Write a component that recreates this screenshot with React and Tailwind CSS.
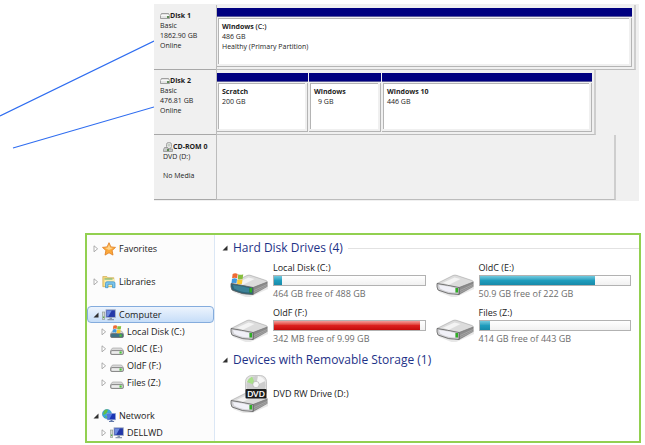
import React from "react";

function SmallDrive() {
  return (
    <svg width="10" height="6" viewBox="0 0 10 6" aria-hidden="true">
      <path d="M1.5 .5h7l1 2v3h-9v-3z" fill="#e4e4e4" stroke="#8b8b8b" strokeWidth=".8" />
      <path d="M.7 2.6h8.6" stroke="#fff" strokeWidth=".8" />
      <rect x="7" y="3" width="2" height="2" fill="#5d8a55" />
    </svg>
  );
}

function CdDrive() {
  return (
    <svg width="10" height="10" viewBox="0 0 10 10" aria-hidden="true">
      <rect x="3.5" y=".5" width="5" height="6" rx="2" fill="#e6e6e6" stroke="#8f8f8f" strokeWidth=".8" />
      <circle cx="6" cy="3" r="1" fill="#fff" stroke="#8fa38f" strokeWidth=".6" />
      <path d="M1.5 5.5h3l1 1.5h4v2.5h-9v-2z" fill="#c9c9c9" stroke="#868686" strokeWidth=".7" />
      <rect x="4" y="7" width="2" height="2" fill="#5d8a55" />
    </svg>
  );
}

function Partition({ name, letter, size, status, grow, indent }) {
  return (
    <div className={"flex min-w-0 flex-col " + grow}>
      <div className="h-[9px] border-b border-[#5a5a9c] bg-[#000080]" />
      <div className="mt-px flex-1 border-r border-b border-[#b4b4b4] bg-[#f0f0f0] pr-[2px] pb-[2px] pl-px">
        <div className="h-full border-t border-l border-[#b4b4b4] bg-white pt-[3px] pl-[3px]">
          <p>
            <b>{name}</b> {letter && <span className="font-semibold">{letter}</span>}
          </p>
          <p className={indent}>{size}</p>
          {status && <p>{status}</p>}
        </div>
      </div>
    </div>
  );
}

function DiskLabel({ name, lines }) {
  return (
    <div className="w-[62px] shrink-0 border-b border-[#a8a8a8] pt-[6px] pl-[6px]">
      <h3 className="flex items-center font-bold">
        <SmallDrive />
        {name}
      </h3>
      {lines.map((l) => (
        <p key={l}>{l}</p>
      ))}
    </div>
  );
}

function DiskManagement() {
  return (
    <section className="min-w-0 flex-1 bg-[#f0f0f0] pt-px pb-px font-['Open_Sans','Liberation_Sans',sans-serif] text-[7px] leading-[10px] text-[#1c1c1c]">
      <div className="flex h-[65px]">
        <DiskLabel name="Disk 1" lines={["Basic", "1862.90 GB", "Online"]} />
        <div className="mr-[3px] flex flex-1 border-r-2 border-b border-l border-[#bcbcbc] border-r-[#cecece] pt-[3px] pr-[2px] pb-[2px]">
          <Partition name="Windows" letter="(C:)" size="486 GB" status="Healthy (Primary Partition)" grow="flex-1" />
        </div>
      </div>
      <div className="flex h-[65px]">
        <DiskLabel name="Disk 2" lines={["Basic", "476.81 GB", "Online"]} />
        <div className="mr-[43px] flex flex-1 gap-px border-r-2 border-b border-l border-[#bcbcbc] border-r-[#cecece] pt-[3px] pr-[2px] pb-[2px]">
          <Partition name="Scratch" size="200 GB" grow="flex-[91]" />
          <Partition name="Windows" size="9 GB" grow="flex-[72]" indent="pl-[4px]" />
          <Partition name="Windows 10" size="446 GB" grow="flex-[210]" />
        </div>
      </div>
      <div className="flex h-[65px]">
        <div className="w-[62px] shrink-0 border-b border-[#a8a8a8] pt-[7px] pl-[9px]">
          <h3 className="flex items-center font-bold whitespace-nowrap">
            <CdDrive />
            CD-ROM 0
          </h3>
          <p>DVD (D:)</p>
          <p className="mt-[9px]">No Media</p>
        </div>
        <div className="mr-[23px] flex-1 border-r-2 border-b border-l border-[#bcbcbc] border-r-[#cecece]" />
      </div>
    </section>
  );
}

function Arrow({ open }) {
  return (
    <svg width="6" height="8" viewBox="0 0 6 8" className="shrink-0" aria-hidden="true">
      {open ? (
        <path d="M5.500 1.500v5H.5z" fill="#303030" />
      ) : (
        <path d="M1 .8v6l3.600-3z" fill="#fff" stroke="#9a9a9a" strokeWidth=".8" />
      )}
    </svg>
  );
}

function StarIcon() {
  return (
    <svg width="14" height="14" viewBox="0 0 14 14" aria-hidden="true">
      <path d="M7 .7l1.900 4.200 4.600.5-3.400 3.100.9 4.600L7 10.800l-4 2.300.9-4.600L.5 5.400l4.600-.5z" fill="#fba93c" stroke="#e07b1c" strokeWidth=".8" />
      <path d="M7 2.500l1.200 3 2.800.4L7 8 3 6l2.800-.5z" fill="#ffd48a" />
    </svg>
  );
}

function LibraryIcon() {
  return (
    <svg width="14" height="14" viewBox="0 0 14 14" aria-hidden="true">
      <path d="M.8 1.500h4l1 1.200h6v9H.8z" fill="#f4d67c" stroke="#c9a444" strokeWidth=".6" />
      <path d="M2.500 4h10v7h-10z" fill="#fbeeb4" />
      <path d="M2.500 4h8" stroke="#79b879" strokeWidth="1.200" />
      <path d="M3.500 12.700V8.200q0-1.400 1.500-1.400h6.500q1.500 0 1.500 1.400v4.500h-2.500V9.300H6v3.400z" fill="#7cc4ec" stroke="#3a8fc4" strokeWidth=".7" />
    </svg>
  );
}

function ComputerIcon() {
  return (
    <svg width="14" height="12" viewBox="0 0 14 12" aria-hidden="true">
      <rect x=".5" y="3" width="2.200" height="7.500" fill="#d4d9d4" stroke="#8a948a" strokeWidth=".6" />
      <rect x="1" y="7.500" width="1.200" height="1.500" fill="#58b04e" />
      <rect x="4" y=".8" width="9.400" height="7.600" fill="#2338a8" stroke="#a9b3c4" strokeWidth=".9" />
      <path d="M4.800 1.600h5L6.300 7.600H4.800z" fill="#6d8be0" />
      <path d="M7.500 8.600h2.500v1.400h2v1.200h-6.500V10h2z" fill="#8c99ad" />
    </svg>
  );
}

function NetworkIcon() {
  return (
    <svg width="14" height="14" viewBox="0 0 14 14" aria-hidden="true">
      <circle cx="5" cy="5" r="4.600" fill="#3aa7dc" stroke="#2580b8" strokeWidth=".5" />
      <path d="M2 2q2-2 4-1.200L5 3.500 3.500 5 1 6zM3 7l2 .6-.5 1.800z" fill="#64c046" />
      <rect x="5.200" y="4.400" width="8.300" height="6.400" fill="#1a35b4" stroke="#8fa5d4" strokeWidth=".7" />
      <path d="M5.800 5h4.400L7.400 10.200H5.800z" fill="#5078e2" />
      <path d="M8.500 11h2v1h1.600v1H7v-1h1.500z" fill="#6278a8" />
    </svg>
  );
}

function Flag({ x, y, s }) {
  return (
    <g transform={`translate(${x} ${y}) scale(${s})`}>
      <path d="M1 .8q2.300-1.200 4.400 0L4.900 4.600q-2.200-1-4.400 0z" fill="#ee6a34" />
      <path d="M5.900 1.100q2.200 1 4.300 0L9.700 4.900q-2.200 1-4.300 0z" fill="#86bd3c" />
      <path d="M.4 5.200q2.200-1.100 4.400 0L4.200 9q-2.200-1-4.200 0z" fill="#3f9ae0" />
      <path d="M5.300 5.500q2.200 1 4.300 0L9.100 9.300q-2.200 1-4.300 0z" fill="#fbca32" />
    </g>
  );
}

function TreeDrive({ windows }) {
  return (
    <svg width="14" height="14" viewBox="0 0 14 14" aria-hidden="true">
      <path d="M2.500 6h9l2 2.500v3q0 1-1 1h-11q-1 0-1-1v-3z" fill="#dadada" stroke="#9a9a9a" strokeWidth=".6" />
      <rect x=".8" y="8.600" width="12.400" height="3.800" rx="1.200" fill={windows ? "#3d7286" : "#ececec"} stroke="#6f6f6f" strokeWidth=".8" />
      <rect x="9.500" y="9.400" width="2.200" height="2.200" fill="#4cc43a" />
      {windows && <Flag x={2.5} y={0} s={0.85} />}
    </svg>
  );
}

const groups = [
  { label: "Favorites", icon: <StarIcon /> },
  { label: "Libraries", icon: <LibraryIcon /> },
  {
    label: "Computer",
    icon: <ComputerIcon />,
    open: true,
    selected: true,
    items: [
      { label: "Local Disk (C:)", icon: <TreeDrive windows /> },
      { label: "OldC (E:)", icon: <TreeDrive /> },
      { label: "OldF (F:)", icon: <TreeDrive /> },
      { label: "Files (Z:)", icon: <TreeDrive /> },
    ],
  },
  {
    label: "Network",
    icon: <NetworkIcon />,
    open: true,
    items: [{ label: "DELLWD", icon: <ComputerIcon /> }],
  },
];

function Sidebar() {
  return (
    <nav className="flex w-[128px] shrink-0 flex-col justify-between border-r border-[#dbe7f5] bg-[#fcfcfc] pt-[5px]">
      {groups.map((g) => (
        <ul key={g.label}>
          <li>
            <a
              href="#"
              className={
                "flex h-[17px] items-center gap-[3px] rounded-sm border pl-[5px] " +
                (g.selected ? "border-[#84acdd] bg-linear-to-b from-[#edf4fd] to-[#c6ddf8]" : "border-transparent")
              }
            >
              <Arrow open={g.open} />
              {g.icon}
              <span>{g.label}</span>
            </a>
          </li>
          {g.items?.map((it) => (
            <li key={it.label}>
              <a href="#" className="flex h-[17px] items-center gap-[3px] pl-[14px]">
                <Arrow />
                {it.icon}
                <span>{it.label}</span>
              </a>
            </li>
          ))}
        </ul>
      ))}
    </nav>
  );
}

function DriveBody({ windows }) {
  return (
    <>
      <path d="M3 15l15 7 20-9v3l-20 9L3 19z" fill="#d8d8d8" opacity=".6" />
      <path d="M1 10.500L17 2.500q2-.8 4 0L36 7.500q2 .8 1 2L21 15.500z" fill="#dcdcdc" stroke="#a2a2a2" strokeWidth=".6" />
      <path d="M7 9.800L18.500 4.500l6 1.500-12 6z" fill="#f4f4f4" />
      <path d="M23 14.500L37.200 9v4.500L23 21.500z" fill="#8b8b8b" stroke="#6c6c6c" strokeWidth=".5" />
      <path d="M24 17.500L37 11.500M24 19.500L37 13" stroke="#b6b6b6" strokeWidth=".6" />
      <path d="M1 10.500q10 1.500 22 4v7q-10 .5-21-4.500-1.500-3-1-6.500z" fill={windows ? "#2c6579" : "#cfcfd2"} stroke="#5d5d5d" strokeWidth=".8" />
      <path d="M3 12q8 1 16 3v4.500q-8 0-15-4z" fill={windows ? "#3d8298" : "#f1f1f8"} />
      <rect x="19.500" y="15" width="2.500" height="4.500" fill="#2fae25" />
    </>
  );
}

function DriveIcon({ windows }) {
  return (
    <svg width="38" height="24" viewBox="0 0 38 24" className="shrink-0" aria-hidden="true">
      <DriveBody windows={windows} />
      {windows && <Flag x={1.5} y={0} s={1.15} />}
    </svg>
  );
}

function DvdIcon() {
  return (
    <svg width="38" height="38" viewBox="0 0 38 38" className="shrink-0" aria-hidden="true">
      <g transform="translate(0 15)">
        <DriveBody />
      </g>
      <rect x="15.500" y=".5" width="21" height="22" rx="6" fill="#e2e2e2" stroke="#b5b5b5" strokeWidth=".7" />
      <circle cx="26" cy="10.500" r="9.600" fill="#cdcdcd" />
      <path d="M26 10.500L17 7q2-4 5-5.500z" fill="#a8e088" />
      <path d="M26 10.500L28 1q5 1 7 5z" fill="#f6f6f6" />
      <circle cx="26" cy="9.500" r="3.200" fill="#f7f7f7" stroke="#aaa" strokeWidth=".6" />
      <rect x="15.500" y="14" width="21" height="9.500" rx="1" fill="#1d1d1d" />
      <text x="26" y="21.500" textAnchor="middle" fontSize="8" fontWeight="bold" fontFamily="Lato, sans-serif" fill="#fff">
        DVD
      </text>
    </svg>
  );
}

function Drive({ name, free, used, full, windows }) {
  return (
    <article className="flex gap-[5px]">
      <div className="pt-[12px]">
        <DriveIcon windows={windows} />
      </div>
      <div className="min-w-0 flex-1">
        <h3 className="leading-[14px]">{name}</h3>
        <div
          role="meter"
          aria-label={name + " used space"}
          aria-valuenow={used}
          aria-valuemin={0}
          aria-valuemax={100}
          className="h-[11px] border border-[#b2b2b2] bg-linear-to-b from-white to-[#f1f1f1]"
        >
          <div
            className={
              "h-full bg-linear-to-b " +
              (full ? "from-[#f39a9a] via-[#dc1f1f] to-[#c40808]" : "from-[#6fcbdf] via-[#1f9dbd] to-[#178aa9]")
            }
            style={{ width: used + "%" }}
          />
        </div>
        <p className="leading-[15px] text-[#6d6d6d]">{free}</p>
      </div>
    </article>
  );
}

function GroupHeading({ children, rule }) {
  return (
    <h2 className="flex h-[18px] items-center gap-[5px] text-[12px] text-[#1e3287]">
      <Arrow open />
      {children}
      {rule && <span className="h-px flex-1 bg-[#e2e2e2]" />}
    </h2>
  );
}

function Explorer() {
  return (
    <section className="mt-8 mr-[4px] ml-[85px] flex border-2 border-[#92d050] bg-white font-['Open_Sans','Liberation_Sans',sans-serif] text-[9px] text-[#1a1a1a]">
      <Sidebar />
      <main className="min-w-0 flex-1 pt-[4px] pb-[28px] pl-[7px]">
        <GroupHeading rule>Hard Disk Drives (4)</GroupHeading>
        <div className="mt-[4px] grid grid-cols-2 gap-x-[10px] gap-y-[5px] pr-[8px] pl-[8px]">
          <Drive name="Local Disk (C:)" free="464 GB free of 488 GB" used={5} windows />
          <Drive name="OldC (E:)" free="50.9 GB free of 222 GB" used={77} />
          <Drive name="OldF (F:)" free="342 MB free of 9.99 GB" used={97} full />
          <Drive name="Files (Z:)" free="414 GB free of 443 GB" used={7} />
        </div>
        <div className="mt-[5px]">
          <GroupHeading>Devices with Removable Storage (1)</GroupHeading>
        </div>
        <div className="mt-[6px] flex items-center gap-[5px] pl-[8px]">
          <DvdIcon />
          <h3>DVD RW Drive (D:)</h3>
        </div>
      </main>
    </section>
  );
}

export default function App() {
  return (
    <div className="min-h-screen bg-white">
      <div className="flex pt-[4px] pr-[6px]">
        <svg width="154" height="197" viewBox="0 4 154 197" className="shrink-0" aria-hidden="true">
          <path d="M0 116L154 41M13 148L154 107" stroke="#2f6df0" strokeWidth="1.200" fill="none" />
        </svg>
        <DiskManagement />
      </div>
      <Explorer />
    </div>
  );
}
